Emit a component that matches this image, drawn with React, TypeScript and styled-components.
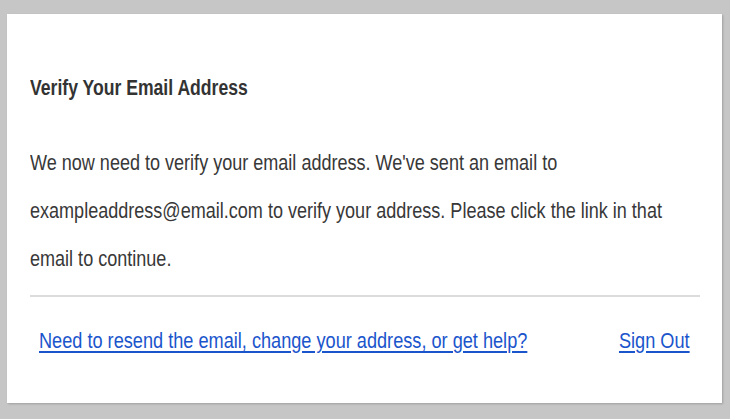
import styled, { createGlobalStyle } from 'styled-components';

const GlobalStyle = createGlobalStyle`
  html, body {
    margin: 0;
    padding: 0;
    background: #c6c6c6;
  }
  body {
    font-family: "Liberation Sans", Arial, sans-serif;
  }
`;

const App = () => {
  return (
    <>
      <GlobalStyle />
      <Page>
        <Card>
          <Title>Verify Your Email Address</Title>
          <Message>
            <Line>We now need to verify your email address. We've sent an email to</Line>
            <Line>exampleaddress@email.com to verify your address. Please click the link in that</Line>
            <Line>email to continue.</Line>
          </Message>
          <Divider />
          <Footer>
            <HelpLink href="#">Need to resend the email, change your address, or get help?</HelpLink>
            <SignOutLink href="#">Sign Out</SignOutLink>
          </Footer>
        </Card>
      </Page>
    </>
  );
};

export default App;

const Page = styled.div`
  width: 730px;
  height: 419px;
  padding: 14px 8px 0 7px;
  box-sizing: border-box;
`;

const Card = styled.div`
  background: #fff;
  height: 389px;
  box-sizing: border-box;
  padding: 62px 22px 0 23px;
  box-shadow: 1px 1px 2px rgba(0, 0, 0, 0.2);
`;

// the original face is a condensed grotesque, so squeeze Liberation Sans to its width
const Title = styled.h1`
  margin: 0;
  font-size: 22px;
  line-height: 24px;
  font-weight: 700;
  color: #333;
  white-space: nowrap;
  transform: scaleX(0.8);
  transform-origin: left center;
`;

const Message = styled.div`
  margin: 39px 0 0;
  font-size: 22px;
  line-height: 48px;
  color: #383838;
`;

const Line = styled.div`
  white-space: nowrap;
  transform: scaleX(0.82);
  transform-origin: left center;
`;

const Divider = styled.hr`
  margin: 12px 0 0;
  border: none;
  border-top: 2px solid #dcdcdc;
`;

const Footer = styled.div`
  display: flex;
  justify-content: space-between;
  align-items: center;
  padding: 32px 10px 0 9px;
`;

const Link = styled.a`
  display: inline-block;
  white-space: nowrap;
  font-size: 22px;
  line-height: 24px;
  color: #1b55cc;
  text-decoration: underline;
  text-underline-offset: 3px;
  transform: scaleX(0.825);
`;

const HelpLink = styled(Link)`
  min-width: 0;
  transform-origin: left center;
`;

const SignOutLink = styled(Link)`
  flex-shrink: 0;
  transform-origin: right center;
`;
